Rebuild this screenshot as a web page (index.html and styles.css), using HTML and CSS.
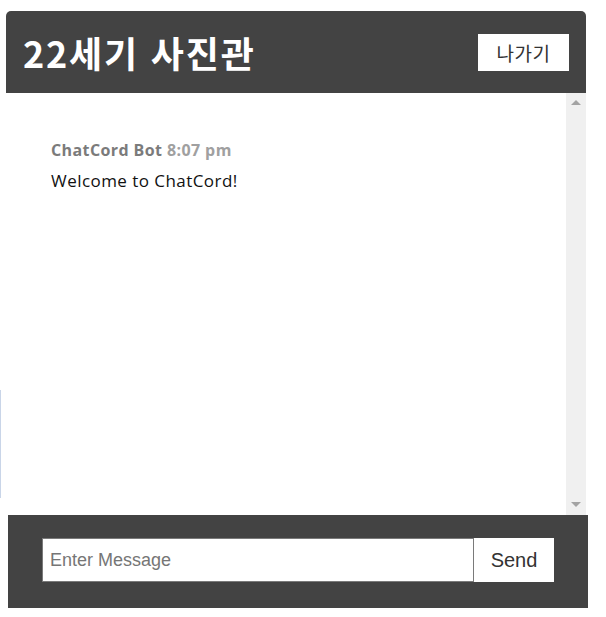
FILE: index.html
```html
<!DOCTYPE html>
<html lang="ko">
<head>
<meta charset="utf-8">
<title>22세기 사진관</title>
<link rel="stylesheet" href="styles.css">
</head>
<body>
<div class="edge-line"></div>
<div class="chat-container">
  <header class="chat-header">
    <h1 class="title">22세기 사진관</h1>
    <a class="btn-leave">나가기</a>
  </header>
  <main class="chat-main">
    <div class="chat-messages">
      <div class="message">
        <p class="meta">ChatCord Bot <span class="time">8:07 pm</span></p>
        <p class="text">Welcome to ChatCord!</p>
      </div>
    </div>
    <div class="scrollbar">
      <span class="arrow up"></span>
      <span class="arrow down"></span>
    </div>
  </main>
  <div class="chat-form-container">
    <form class="chat-form">
      <input class="msg-input" type="text" placeholder="Enter Message">
      <button class="btn-send" type="button">Send</button>
    </form>
  </div>
</div>
</body>
</html>
```
FILE: styles.css
```css
* { box-sizing: border-box; }
html, body { margin: 0; padding: 0; background: #fff; }
body {
  font-family: "Noto Sans CJK KR", "Noto Sans", sans-serif;
  position: relative;
  width: 606px;
  height: 617px;
  overflow: hidden;
}
.edge-line {
  position: absolute;
  left: 0;
  top: 390px;
  width: 1px;
  height: 108px;
  background: #c9d5e8;
}
.chat-container {
  padding-top: 11px;
}
.chat-header {
  margin-left: 6px;
  width: 580px;
  height: 82px;
  background: #434343;
  border-radius: 5px 5px 0 0;
  display: flex;
  align-items: center;
  justify-content: space-between;
  padding: 0 17px 0 17px;
}
.title {
  margin: 0;
  color: #fff;
  font-size: 36px;
  font-weight: 700;
  letter-spacing: 1.8px;
  line-height: 1;
  position: relative;
  top: 0;
}
.btn-leave {
  background: #fff;
  color: #333;
  width: 91px;
  height: 37px;
  display: flex;
  align-items: center;
  justify-content: center;
  font-size: 19px;
  letter-spacing: 0.5px;
  line-height: 1;
  margin-top: 1px;
}
.chat-main {
  margin-left: 6px;
  width: 580px;
  height: 422px;
  display: flex;
  background: #fff;
}
.chat-messages {
  flex: 1;
  padding: 46px 0 0 45px;
  font-family: "Open Sans", "Noto Sans CJK KR", sans-serif;
}
.message p { margin: 0; }
.meta {
  font-size: 16px;
  font-weight: 700;
  letter-spacing: 0.4px;
  color: #7b7b7b;
  line-height: 22px;
}
.time { color: #a0a0a0; }
.text {
  font-size: 17px;
  letter-spacing: 0.45px;
  color: #111;
  line-height: 22px;
  margin-top: 9px !important;
}
.scrollbar {
  width: 20px;
  background: #f0f0f0;
  display: flex;
  flex-direction: column;
  justify-content: space-between;
  align-items: center;
  padding: 7px 0 8px;
  margin-left: 1px;
}
.arrow {
  width: 0;
  height: 0;
  border-left: 5px solid transparent;
  border-right: 5px solid transparent;
}
.arrow.up { border-bottom: 5px solid #a3a3a3; }
.arrow.down { border-top: 5px solid #a3a3a3; }
.chat-form-container {
  margin-left: 8px;
  width: 580px;
  height: 93px;
  background: #434343;
  padding: 23px 0 0 34px;
}
.chat-form {
  display: flex;
  margin: 0;
}
.msg-input {
  width: 432px;
  height: 44px;
  border: 1px solid #7a7a7a;
  background: #fff;
  font-family: "Liberation Sans", Arial, sans-serif;
  font-size: 18px;
  padding: 0 7px;
  margin: 0;
  outline: none;
}
.msg-input::placeholder { color: #767676; }
.btn-send {
  width: 80px;
  height: 44px;
  border: none;
  background: #fff;
  color: #333;
  font-family: "Liberation Sans", Arial, sans-serif;
  font-size: 20px;
  padding: 0;
  margin: 0;
}
```
